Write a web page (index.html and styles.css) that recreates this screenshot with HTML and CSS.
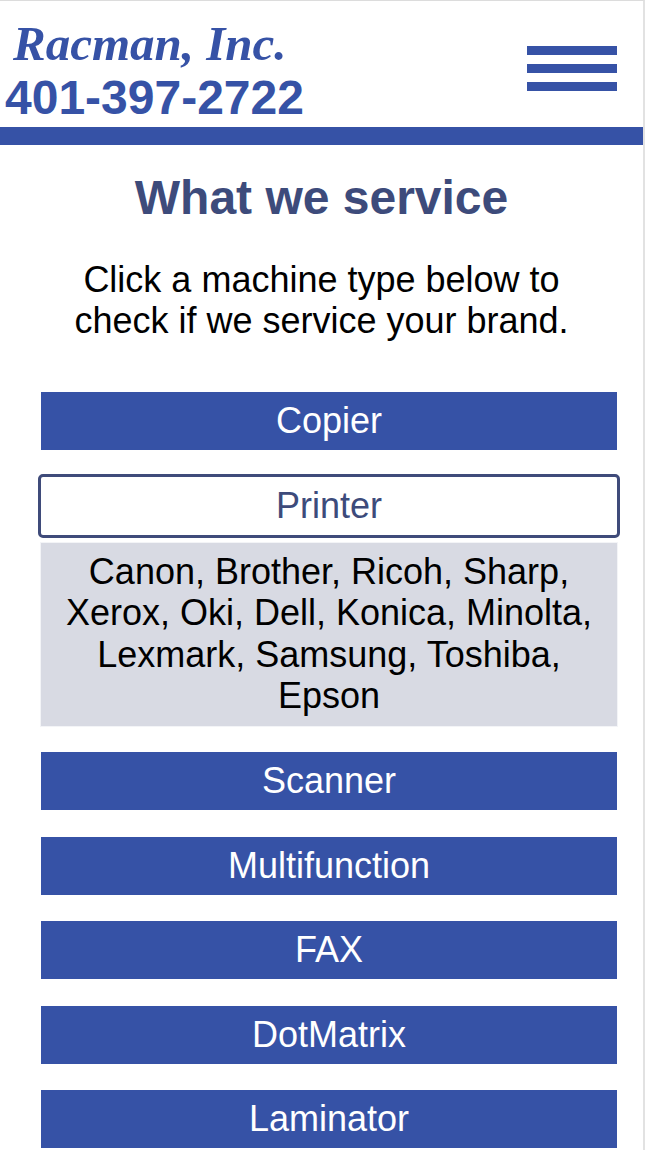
FILE: index.html
```html
<!DOCTYPE html>
<html lang="en">
<head>
<meta charset="utf-8">
<title>Racman, Inc. - What we service</title>
<link rel="stylesheet" href="styles.css">
</head>
<body>
<div class="page">
  <header class="header">
    <div class="brand">
      <div class="logo">Racman, Inc.</div>
      <div class="phone">401-397-2722</div>
    </div>
    <div class="menu" aria-label="Menu">
      <span></span><span></span><span></span>
    </div>
  </header>
  <div class="rule"></div>
  <main class="content">
    <h1 class="title">What we service</h1>
    <p class="intro">Click a machine type below to check if we service your brand.</p>
    <div class="list">
      <div class="item"><button class="btn">Copier</button></div>
      <div class="item open">
        <button class="btn active">Printer</button>
        <div class="panel">Canon, Brother, Ricoh, Sharp, Xerox, Oki, Dell, Konica, Minolta, Lexmark, Samsung, Toshiba, Epson</div>
      </div>
      <div class="item"><button class="btn">Scanner</button></div>
      <div class="item"><button class="btn">Multifunction</button></div>
      <div class="item"><button class="btn">FAX</button></div>
      <div class="item"><button class="btn">DotMatrix</button></div>
      <div class="item"><button class="btn">Laminator</button></div>
    </div>
  </main>
</div>
</body>
</html>
```
FILE: styles.css
```css
html, body {
  margin: 0;
  padding: 0;
  background: #ffffff;
}

.page {
  width: 645px;
  min-height: 1150px;
  box-sizing: border-box;
  border-top: 1px solid #dcdcdc;
  border-right: 2px solid #e2e2e2;
  font-family: "Liberation Sans", Arial, sans-serif;
}

.header {
  display: flex;
  justify-content: space-between;
  align-items: flex-start;
  height: 126px;
}

.brand {
  display: flex;
  flex-direction: column;
}

.logo {
  font-family: "Liberation Serif", "Times New Roman", serif;
  font-style: italic;
  font-weight: bold;
  font-size: 49px;
  line-height: 50px;
  color: #3652a6;
  margin: 18px 0 0 13px;
}

.phone {
  font-weight: bold;
  font-size: 48px;
  line-height: 48px;
  color: #3652a6;
  margin: 5px 0 0 5px;
}

.menu {
  display: flex;
  flex-direction: column;
  gap: 9px;
  margin: 45px 26px 0 0;
}

.menu span {
  display: block;
  width: 90px;
  height: 9px;
  background: #3652a6;
}

.rule {
  height: 18px;
  background: #3652a6;
}

.content {
  display: flex;
  flex-direction: column;
}

.title {
  margin: 25px 0 0;
  text-align: center;
  font-size: 48px;
  line-height: 55px;
  font-weight: bold;
  color: #3d4b7b;
}

.intro {
  margin: 34px auto 0;
  width: 540px;
  text-align: center;
  font-size: 36px;
  line-height: 41px;
  color: #000000;
}

.list {
  display: flex;
  flex-direction: column;
  gap: 26.5px;
  margin: 51px 0 0 41px;
  width: 576px;
}

.item {
  display: flex;
  flex-direction: column;
}

.btn {
  display: block;
  width: 100%;
  height: 58px;
  margin: 0;
  padding: 0;
  border: none;
  background: #3652a6;
  color: #ffffff;
  font-family: "Liberation Sans", Arial, sans-serif;
  font-size: 36px;
  line-height: 58px;
  text-align: center;
  cursor: pointer;
}

.btn.active {
  background: #ffffff;
  color: #3d4b7b;
  outline: 3px solid #3f4b7a;
  outline-offset: 0;
  border-radius: 2px;
}

.panel {
  margin-top: 8px;
  padding: 8px 10px 9px;
  background: #d8dae3;
  box-shadow: 0 0 0 1px #f3f4f7;
  text-align: center;
  font-size: 36px;
  line-height: 41.5px;
  color: #000000;
}
```
